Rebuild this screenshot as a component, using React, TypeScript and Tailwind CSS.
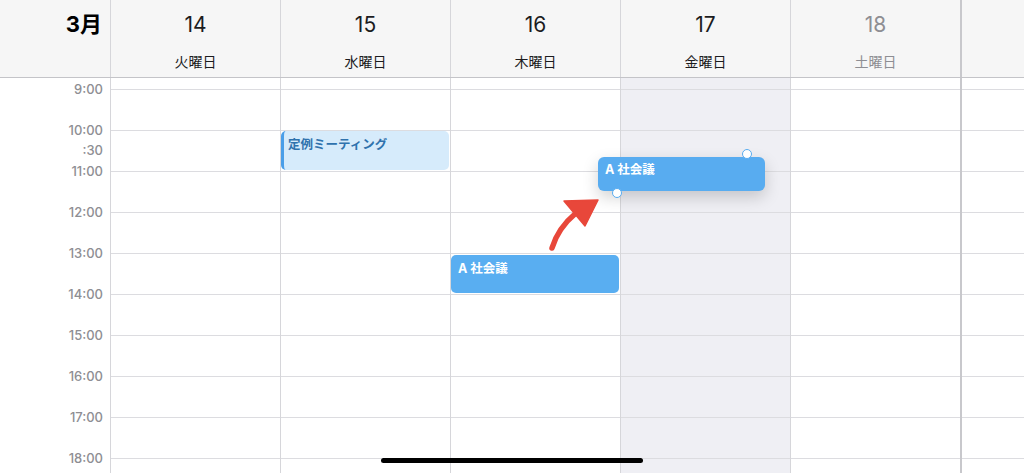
import React from "react";

const days = [
  { num: "14", label: "火曜日", muted: false, today: false },
  { num: "15", label: "水曜日", muted: false, today: false },
  { num: "16", label: "木曜日", muted: false, today: false },
  { num: "17", label: "金曜日", muted: false, today: true },
  { num: "18", label: "土曜日", muted: true, today: false },
];

const hours = ["9:00", "10:00", "11:00", "12:00", "13:00", "14:00", "15:00", "16:00", "17:00", "18:00"];

function HourLines() {
  return (
    <div className="pt-[11px]">
      {hours.map((h) => (
        <div key={h} className="h-[41px] border-t border-[#dcdce0]" />
      ))}
    </div>
  );
}

function Handle({ className }: { className: string }) {
  return (
    <div
      className={`absolute w-[10px] h-[10px] rounded-full bg-white border-[1.5px] border-[#58acf0] ${className}`}
    />
  );
}

export default function App() {
  return (
    <div
      className="relative w-[1024px] h-[473px] overflow-hidden bg-white"
      style={{ fontFamily: 'Inter, "Noto Sans CJK JP", sans-serif' }}
    >
      {/* header */}
      <div className="flex h-[78px] bg-[#f6f6f6] border-b border-[#c4c4c8]">
        <div className="w-[110px] shrink-0 pt-[8px] pr-[8px] text-right text-[22px] font-bold leading-[32px] text-black">
          3月
        </div>
        {days.map((d) => (
          <div
            key={d.num}
            className="w-[170px] shrink-0 border-l border-[#d6d6da] flex flex-col items-center"
          >
            <div
              className={`mt-[10px] text-[21px] leading-[30px] ${d.muted ? "text-[#8e8e93]" : "text-[#1c1c1e]"}`}
            >
              {d.num}
            </div>
            <div
              className={`mt-[13px] text-[14px] leading-[18px] ${d.muted ? "text-[#8e8e93]" : "text-[#1c1c1e]"}`}
            >
              {d.label}
            </div>
          </div>
        ))}
        <div className="flex-1 border-l-2 border-[#c8c8cc]" />
      </div>

      {/* body */}
      <div className="relative flex">
        <div className="w-[110px] shrink-0 pt-[3px] pr-[7px] text-right text-[13px] font-medium leading-[16px] text-[#8e8e93]">
          {hours.map((h) => (
            <div key={h} className="h-[41px]">
              <div>{h}</div>
              {h === "10:00" && <div className="mt-[4px]">:30</div>}
            </div>
          ))}
        </div>
        {days.map((d) => (
          <div
            key={d.num}
            className={`w-[170px] shrink-0 border-l border-[#d6d6da] h-[400px] ${d.today ? "bg-[#efeff4]" : ""}`}
          >
            <HourLines />
          </div>
        ))}
        <div className="flex-1 border-l-2 border-[#c8c8cc] h-[400px]">
          <HourLines />
        </div>

        {/* events */}
        <div className="absolute left-[281px] top-[53px] w-[168px] h-[39px] rounded-[5px] bg-[#d6ebfb] border-l-[3px] border-[#4a9ee8] pl-[4px] pt-[6px] text-[12.5px] font-bold leading-[16px] text-[#2f72ad]">
          定例ミーティング
        </div>
        <div className="absolute left-[451px] top-[177px] w-[168px] h-[38px] rounded-[5px] bg-[#59aef1] pl-[7px] pt-[6px] text-[12.5px] font-bold leading-[16px] text-white">
          A 社会議
        </div>
        <div className="absolute left-[598px] top-[79px] w-[167px] h-[34px] rounded-[6px] bg-[#58acf0] pl-[7px] pt-[5px] text-[12.5px] font-bold leading-[16px] text-white shadow-[0_6px_16px_rgba(0,0,0,0.18)]">
          A 社会議
        </div>
        <Handle className="left-[742px] top-[71px]" />
        <Handle className="left-[612px] top-[110px]" />

        {/* arrow */}
        <svg className="absolute left-0 top-0" width="1024" height="400" viewBox="0 78 1024 400">
          <path
            d="M552 248 Q558 228 576 213"
            fill="none"
            stroke="#e8473a"
            strokeWidth="5.5"
            strokeLinecap="round"
          />
          <path d="M564 201 L598 200 L585 226 Z" fill="#e8473a" strokeLinejoin="round" stroke="#e8473a" strokeWidth="1.5" />
        </svg>
      </div>

      {/* home indicator */}
      <div className="absolute left-1/2 -translate-x-1/2 bottom-[10px] w-[262px] h-[5px] rounded-full bg-black" />
    </div>
  );
}
